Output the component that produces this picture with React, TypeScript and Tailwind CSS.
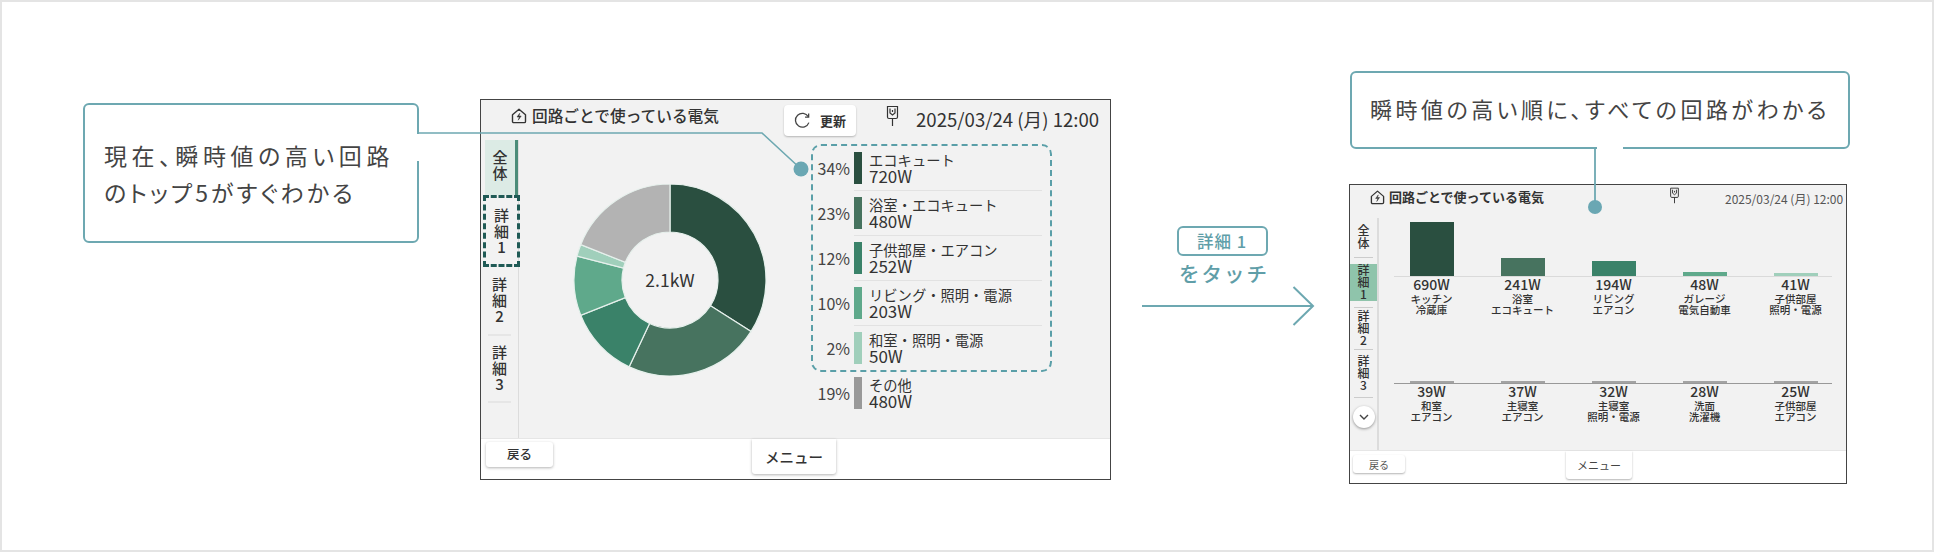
const jp = "font-['Noto_Sans_CJK_JP','Noto_Sans',sans-serif]";

const slices = [
  { pct: 34, color: "#2a4f40" },
  { pct: 23, color: "#47735f" },
  { pct: 12, color: "#3a8269" },
  { pct: 10, color: "#5fa98b" },
  { pct: 2, color: "#a0cfbb" },
  { pct: 19, color: "#b3b3b3" },
];

const legend = [
  { pct: "34%", color: "#2a4f40", name: "エコキュート", watt: "720W" },
  { pct: "23%", color: "#47735f", name: "浴室・エコキュート", watt: "480W" },
  { pct: "12%", color: "#3a8269", name: "子供部屋・エアコン", watt: "252W" },
  { pct: "10%", color: "#5fa98b", name: "リビング・照明・電源", watt: "203W" },
  { pct: "2%", color: "#a0cfbb", name: "和室・照明・電源", watt: "50W" },
  { pct: "19%", color: "#999999", name: "その他", watt: "480W" },
];

const topRow = [
  { watt: "690W", a: "キッチン", b: "冷蔵庫", h: "h-[54px]", color: "bg-[#2a4f40]" },
  { watt: "241W", a: "浴室", b: "エコキュート", h: "h-[18px]", color: "bg-[#47735f]" },
  { watt: "194W", a: "リビング", b: "エアコン", h: "h-[15px]", color: "bg-[#3a8269]" },
  { watt: "48W", a: "ガレージ", b: "電気自動車", h: "h-[4px]", color: "bg-[#5fa98b]" },
  { watt: "41W", a: "子供部屋", b: "照明・電源", h: "h-[3px]", color: "bg-[#a0cfbb]" },
];

const bottomRow = [
  { watt: "39W", a: "和室", b: "エアコン" },
  { watt: "37W", a: "主寝室", b: "エアコン" },
  { watt: "32W", a: "主寝室", b: "照明・電源" },
  { watt: "28W", a: "洗面", b: "洗濯機" },
  { watt: "25W", a: "子供部屋", b: "エアコン" },
];

function Donut() {
  const cx = 97;
  const cy = 96;
  const outer = 96;
  const inner = 48;
  let start = 0;
  return (
    <svg width="194" height="192" viewBox="0 0 194 192">
      {slices.map((s) => {
        const a0 = (start / 100) * Math.PI * 2;
        start += s.pct;
        const a1 = (start / 100) * Math.PI * 2;
        const large = s.pct > 50 ? 1 : 0;
        const pt = (r: number, a: number) => `${cx + r * Math.sin(a)} ${cy - r * Math.cos(a)}`;
        const d = `M${pt(outer, a0)} A${outer} ${outer} 0 ${large} 1 ${pt(outer, a1)} L${pt(inner, a1)} A${inner} ${inner} 0 ${large} 0 ${pt(inner, a0)} Z`;
        return <path key={s.color} d={d} fill={s.color} stroke="#e6f0ec" strokeWidth="1.2" />;
      })}
    </svg>
  );
}

function HomeIcon({ size }: { size: number }) {
  return (
    <svg width={size} height={size} viewBox="0 0 16 16" fill="none" stroke="#333" strokeWidth="1.4">
      <path d="M1.5 6.8 8 1.2l6.5 5.6v6.6a1.2 1.2 0 0 1-1.2 1.2H2.7a1.2 1.2 0 0 1-1.2-1.2z" strokeLinejoin="round" />
      <path d="M8.8 5.2 6 9h2.4l-1.2 3.2L10.2 8H7.9z" strokeWidth="0.5" fill="#333" />
    </svg>
  );
}

function PlugIcon({ w, h }: { w: number; h: number }) {
  return (
    <svg width={w} height={h} viewBox="0 0 13 22" fill="none" stroke="#333" strokeWidth="1.2">
      <path d="M1.5 1.5h10v10.5a1.5 1.5 0 0 1-1.5 1.5H3A1.5 1.5 0 0 1 1.5 12z" />
      <path d="M6.5 13.5V21M4 3.5v4.5l2.5 2 2.5-2V3.5M6.5 5v2" />
    </svg>
  );
}

function VerticalLabel({ chars, className }: { chars: string[]; className: string }) {
  return (
    <div className={`flex flex-col items-center ${className}`}>
      {chars.map((c) => (
        <span key={c}>{c}</span>
      ))}
    </div>
  );
}

function LeftScreen() {
  return (
    <div className={`ml-[61px] mt-[97px] flex h-[381px] w-[631px] flex-col border-[1.5px] border-[#444] bg-[#f2f2f2] text-[#333] ${jp}`}>
      <div className="flex h-[39.5px] shrink-0 items-start">
        <div className="ml-[30px] mt-[6px] flex items-center gap-[5px]">
          <HomeIcon size={16} />
          <span className="text-[15.7px] font-medium leading-[20px]">回路ごとで使っている電気</span>
        </div>
        <div className="ml-[65px] mt-[5px] flex h-[31px] w-[72px] items-center justify-center gap-[9px] rounded-[4px] bg-white shadow-[0_1px_2px_rgba(0,0,0,0.25)]">
          <svg width="17" height="17" viewBox="0 0 16 16" fill="none" stroke="#444" strokeWidth="1.2">
            <path d="M13.5 4.5A6.5 6.5 0 1 0 14 10" />
            <path d="M13.8 1.5v3.4h-3.4" />
          </svg>
          <span className="text-[13px] font-bold">更新</span>
        </div>
        <div className="ml-[30px] mt-[5px]">
          <PlugIcon w={13} h={22} />
        </div>
        <span className="ml-[17px] mt-[7px] text-[18.6px] leading-[24px]">2025/03/24 (月) 12:00</span>
      </div>

      <div className="flex min-h-0 flex-1">
        <div className="flex w-[38px] shrink-0 flex-col border-r border-[#dcdcdc]">
          <VerticalLabel
            chars={["全", "体"]}
            className="ml-[4px] h-[55px] justify-center border-r-[3px] border-[#4a8c78] bg-[#dcebe5] pb-[4px] text-[15px] font-medium leading-[16px]"
          />
          <VerticalLabel chars={["詳", "細", "1"]} className="relative z-10 -mr-[2px] ml-[2px] h-[72px] justify-center border-[3px] border-dashed border-[#1f5a55] text-[15px] font-medium leading-[16px]" />
          <VerticalLabel chars={["詳", "細", "2"]} className="mx-[7px] h-[69px] justify-center border-b-2 border-[#e6e6e6] text-[15px] font-medium leading-[16px]" />
          <VerticalLabel chars={["詳", "細", "3"]} className="mx-[7px] h-[67px] justify-center border-b-2 border-[#e6e6e6] text-[15px] font-medium leading-[16px]" />
        </div>

        <div className="relative ml-[54px] mt-[44px] h-[192px]">
          <Donut />
          <span className="absolute left-1/2 top-[84px] -translate-x-1/2 text-[17.5px] leading-[24px] text-[#333]">2.1kW</span>
        </div>

        <div className="relative ml-[44px] mt-[6px] flex w-[240px] flex-col">
          <div className="absolute left-[0px] top-[-2px] h-[228px] w-[241px] rounded-[10px] border-2 border-dashed border-[#5a9fa8]" />
          {legend.map((row, i) => (
            <div key={row.name} className="flex h-[45px] shrink-0 items-center">
              <span className="w-[39px] shrink-0 text-right text-[16px] leading-none text-[#444]">{row.pct}</span>
              <div className={`ml-[4px] flex h-full flex-1 items-center ${i < 4 ? "mr-[9px] border-b border-[#e2e2e2]" : ""}`}>
                <div className="h-[32px] w-[8px] shrink-0" style={{ background: row.color }} />
                <div className="ml-[7px] flex flex-col leading-[16px]">
                  <span className="text-[14.3px]">{row.name}</span>
                  <span className="text-[17px]">{row.watt}</span>
                </div>
              </div>
            </div>
          ))}
        </div>
      </div>

      <div className="relative flex h-[41px] shrink-0 border-t border-[#e6e6e6] bg-white">
        <div className="ml-[5px] mt-[3px] flex h-[25px] w-[67px] items-center justify-center rounded-[3px] bg-white text-[12.5px] font-medium shadow-[0_1px_3px_rgba(0,0,0,0.3)]">戻る</div>
        <div className="ml-[199px] flex h-[35px] w-[84px] items-center justify-center rounded-b-[3px] bg-white text-[14.5px] font-medium shadow-[0_1px_3px_rgba(0,0,0,0.3)]">メニュー</div>
      </div>
    </div>
  );
}

function BarColumn({ item, bar }: { item: { watt: string; a: string; b: string }; bar: string }) {
  return (
    <div className="flex w-[91px] flex-col items-center">
      <div className="flex h-[54px] items-end">
        <div className={`w-[44px] ${bar}`} />
      </div>
      <div className="text-[14px] font-medium leading-[16px]">{item.watt}</div>
      <div className="mt-[1px] text-[10.5px] font-medium leading-[11px]">{item.a}</div>
      <div className="text-[10.5px] font-medium leading-[11px]">{item.b}</div>
    </div>
  );
}

function RightScreen() {
  return (
    <div className={`ml-[-3px] mt-[35px] flex h-[300px] w-[498px] flex-col border-[1.5px] border-[#444] bg-[#f2f2f2] text-[#333] ${jp}`}>
      <div className="flex h-[32.5px] shrink-0 items-start">
        <div className="ml-[20px] mt-[4px] flex items-center gap-[4px]">
          <HomeIcon size={15} />
          <span className="text-[13px] font-bold leading-[16px]">回路ごとで使っている電気</span>
        </div>
        <div className="ml-[125px] mt-[2px]">
          <PlugIcon w={11} h={17} />
        </div>
        <span className="ml-[45px] mt-[6px] text-[12px] leading-[16px] text-[#555]">2025/03/24 (月) 12:00</span>
      </div>

      <div className="flex min-h-0 flex-1">
        <div className="flex w-[29px] shrink-0 flex-col items-stretch border-r-2 border-[#dcdcdc]">
          <VerticalLabel chars={["全", "体"]} className="mx-[4px] mt-[4px] h-[36px] justify-center border-b border-[#ccc] pb-[6px] text-[12px] font-medium leading-[13px]" />
          <VerticalLabel chars={["詳", "細", "1"]} className="mt-[6px] h-[37px] justify-center bg-[#8fc4ab] text-[12px] font-medium leading-[12px]" />
          <VerticalLabel chars={["詳", "細", "2"]} className="mx-[4px] mt-[6px] h-[43px] justify-center border-y border-[#ccc] text-[12px] font-medium leading-[12px]" />
          <VerticalLabel chars={["詳", "細", "3"]} className="mx-[4px] h-[48px] justify-center border-b border-[#ccc] text-[12px] font-medium leading-[12px]" />
          <div className="ml-[3px] mt-[8px] flex h-[22px] w-[22px] items-center justify-center rounded-full bg-white shadow-[0_1px_3px_rgba(0,0,0,0.4)]">
            <svg width="12" height="12" viewBox="0 0 12 12" fill="none" stroke="#444" strokeWidth="1.4">
              <path d="M2 4l4 4 4-4" />
            </svg>
          </div>
        </div>

        <div className="relative ml-[7px] flex flex-1 flex-col pt-[4px]">
          <div className="absolute left-[8px] top-[58px] h-px w-[438px] bg-[#dadada]" />
          <div className="absolute left-[8px] top-[165px] h-px w-[438px] bg-[#999]" />
          <div className="flex">
            {topRow.map((item) => (
              <BarColumn key={item.watt} item={item} bar={`${item.h} ${item.color}`} />
            ))}
          </div>
          <div className="mt-[14px] flex">
            {bottomRow.map((item) => (
              <BarColumn key={item.watt} item={item} bar="h-[2px] bg-[#a3a3a3]" />
            ))}
          </div>
        </div>
      </div>

      <div className="flex h-[33px] shrink-0 border-t border-[#e6e6e6] bg-white">
        <div className="ml-[3px] mt-[4px] flex h-[18px] w-[52px] items-center justify-center rounded-[3px] bg-white text-[10px] text-[#555] shadow-[0_1px_2px_rgba(0,0,0,0.3)]">戻る</div>
        <div className="ml-[161px] flex h-[28px] w-[66px] items-center justify-center rounded-b-[3px] bg-white text-[11px] text-[#444] shadow-[0_1px_2px_rgba(0,0,0,0.3)]">メニュー</div>
      </div>
    </div>
  );
}

export default function App() {
  return (
    <div className={`relative flex h-[552px] w-[1934px] items-start overflow-hidden border-2 border-[#e4e4e4] bg-white ${jp}`}>
      <div className="ml-[81px] mt-[101px] h-[140px] w-[336px] shrink-0 rounded-[6px] border-2 border-[#6da8b1] pl-[19px] pt-[32px] text-[23px] leading-[37px] tracking-[4.6px] text-[#444] [font-feature-settings:'palt']">
        <div>現在、瞬時値の高い回路</div>
        <div className="tracking-[3px]">のトップ5がすぐわかる</div>
      </div>

      <LeftScreen />

      <div className="ml-[29px] mt-[224px] flex w-[172px] shrink-0 flex-col items-center text-[#5f9ea8]">
        <div className="ml-[-8px] flex h-[30px] w-[91px] items-center justify-center rounded-[6px] border-2 border-[#6da8b1] text-[16.5px] font-medium tracking-[1px]">詳細 1</div>
        <div className="ml-[-4px] mt-[2px] text-[20.5px] font-medium leading-[30px] tracking-[2px]">をタッチ</div>
      </div>

      <div className="ml-[40px] flex shrink-0 flex-col">
        <div className="ml-[-2px] mt-[69px] flex h-[78px] w-[500px] items-start rounded-[6px] border-2 border-[#6da8b1] pl-[18px] pt-[20px] text-[22px] leading-[30px] tracking-[3.5px] text-[#444] [font-feature-settings:'palt']">
          瞬時値の高い順に、すべての回路がわかる
        </div>
        <RightScreen />
      </div>

      {/* connectors and the arrow lie over everything else */}
      <svg className="pointer-events-none absolute left-[-2px] top-[-2px]" width="1934" height="552" viewBox="0 0 1934 552" fill="none">
        <rect x="415" y="134" width="5" height="27" fill="#fff" />
        <path d="M417 133H762L801 169" stroke="#6da8b1" strokeWidth="1.6" />
        <circle cx="801" cy="169" r="7.5" fill="#6aa7b3" />
        <rect x="1597" y="145" width="26" height="5" fill="#fff" />
        <path d="M1595 147V207" stroke="#6da8b1" strokeWidth="1.8" />
        <circle cx="1595" cy="207" r="7" fill="#6aa7b3" />
        <path d="M1142 306H1312M1293.5 287 1313 306 1293.5 325" stroke="#6da8b1" strokeWidth="2" />
      </svg>
    </div>
  );
}
